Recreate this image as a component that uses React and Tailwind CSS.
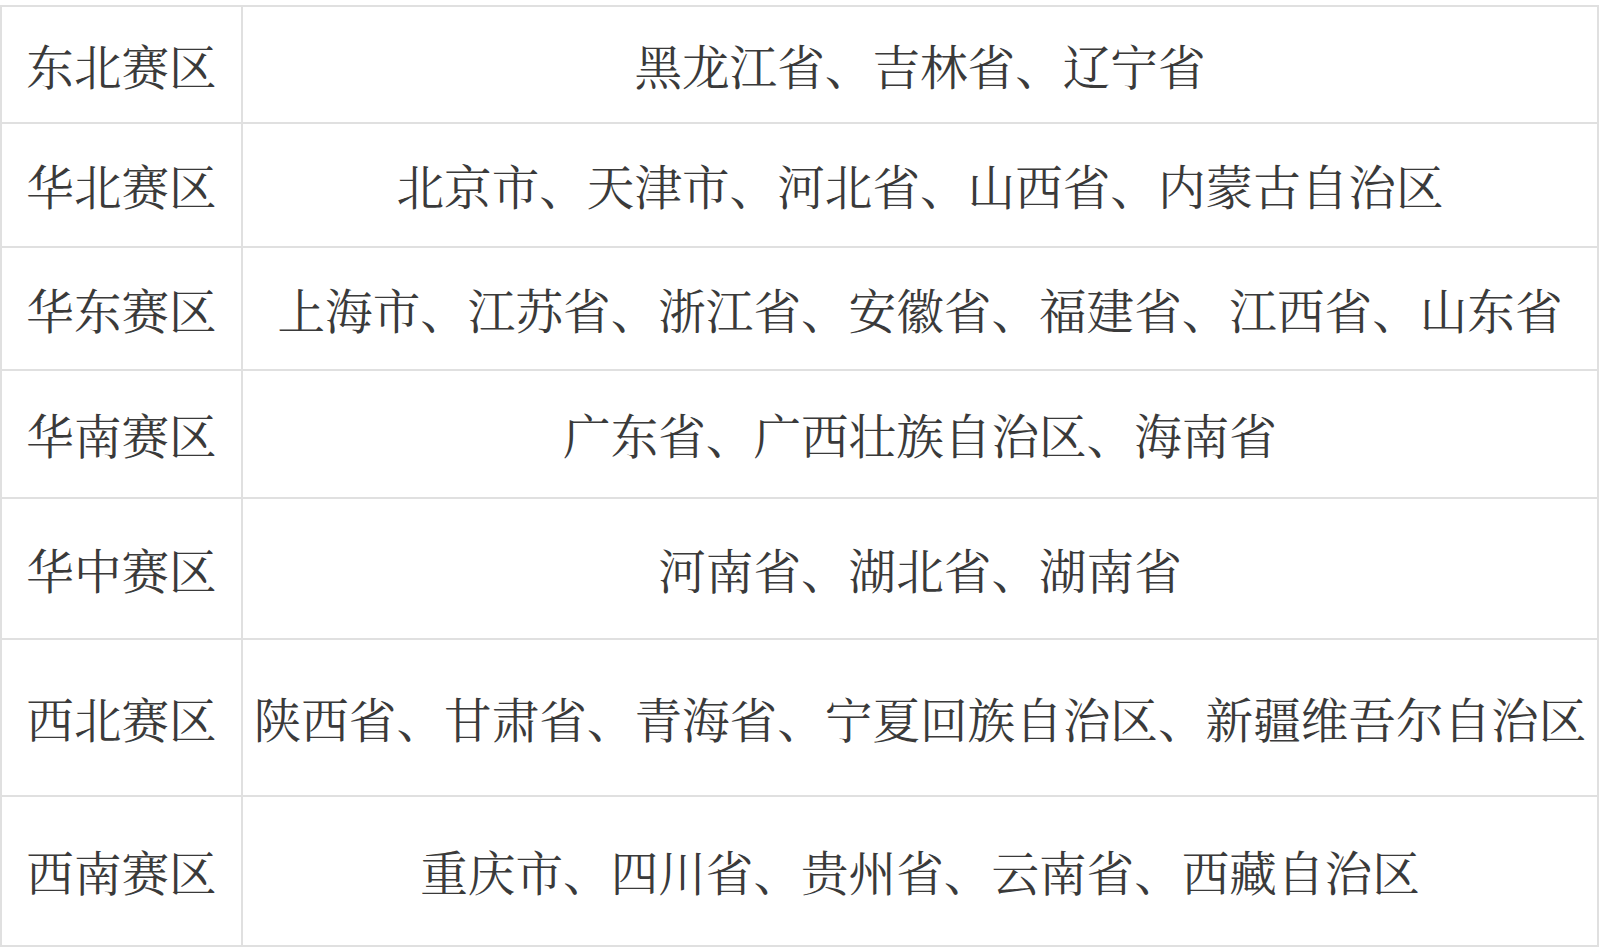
export default function App() {
  const rows = [
    ["东北赛区", "黑龙江省、吉林省、辽宁省", "h-[117px]"],
    ["华北赛区", "北京市、天津市、河北省、山西省、内蒙古自治区", "h-[124px]"],
    ["华东赛区", "上海市、江苏省、浙江省、安徽省、福建省、江西省、山东省", "h-[123px]"],
    ["华南赛区", "广东省、广西壮族自治区、海南省", "h-[128px]"],
    ["华中赛区", "河南省、湖北省、湖南省", "h-[141px]"],
    ["西北赛区", "陕西省、甘肃省、青海省、宁夏回族自治区、新疆维吾尔自治区", "h-[157px]"],
    ["西南赛区", "重庆市、四川省、贵州省、云南省、西藏自治区", "h-[148px]"],
  ];
  return (
    <div className="w-[1600px] h-[950px] bg-white overflow-hidden">
      <div
        className="mt-[5px] w-[1599px] border-2 border-[#e0e0e0] text-[#3a3a3a] text-[47.6px] leading-none"
        style={{ fontFamily: '"Noto Serif CJK SC", "Noto Sans CJK SC", serif' }}
      >
        {rows.map(([a, b, h], i) => (
          <div
            key={a}
            className={`flex ${h} ${i < rows.length - 1 ? "border-b-2 border-[#e0e0e0]" : ""}`}
          >
            <div className="w-[241px] shrink-0 border-r-2 border-[#e0e0e0] flex items-center justify-center whitespace-nowrap">
              {a}
            </div>
            <div className="flex-1 flex items-center justify-center whitespace-nowrap">
              {b}
            </div>
          </div>
        ))}
      </div>
    </div>
  );
}
